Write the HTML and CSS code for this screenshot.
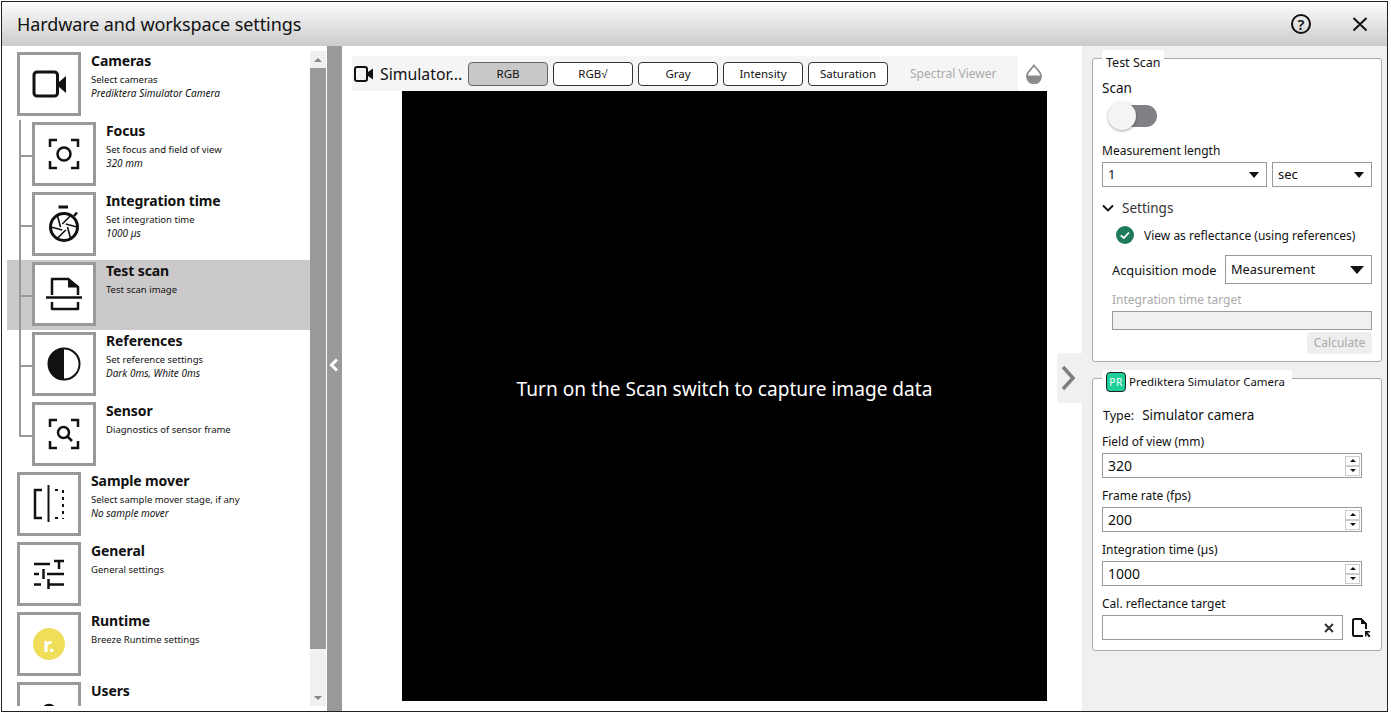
FILE: index.html
```html
<!DOCTYPE html>
<html lang="en">
<head>
<meta charset="utf-8">
<title>Hardware and workspace settings</title>
<link rel="stylesheet" href="styles.css">
</head>
<body>
<div class="window">
  <header class="titlebar">
    <h1 class="title">Hardware and workspace settings</h1>
    <span class="help">?</span>
    <svg class="close" width="16" height="16" viewBox="0 0 16 16"><path d="M1.5 2 14.5 14.5M14.5 2 1.5 14.5" fill="none" stroke="#111" stroke-width="2"/></svg>
  </header>
  <div class="body">
    <aside class="left">
      <div class="list">
        <div class="row">
          <div class="box"><svg width="58" height="58" viewBox="0 0 58 58"><rect x="14" y="17" width="23.5" height="24" rx="3" fill="none" stroke="#111" stroke-width="3"/><path d="M39 27 46 21V38L39 32Z" fill="#111"/></svg></div>
          <div class="text"><div class="name">Cameras</div><div class="sub">Select cameras</div><div class="info">Prediktera Simulator Camera</div></div>
        </div>
        <div class="row nested">
          <div class="box"><svg width="58" height="58" viewBox="0 0 58 58"><path d="M15 22V15H22M36 15H43V22M43 36V43H36M22 43H15V36" fill="none" stroke="#111" stroke-width="2.5"/><circle cx="29" cy="29" r="6.5" fill="none" stroke="#111" stroke-width="2.5"/></svg></div>
          <div class="text"><div class="name">Focus</div><div class="sub">Set focus and field of view</div><div class="info">320 mm</div></div>
        </div>
        <div class="row nested">
          <div class="box"><svg width="58" height="58" viewBox="0 0 58 58"><g fill="none" stroke="#111"><circle cx="29" cy="32" r="13.5" stroke-width="3"/><path d="M23.500 12H33" stroke-width="3"/><path d="M39 21 42 17.500" stroke-width="2.500"/><path stroke-width="1.600" d="M32.500 32 35.500 43.300M30.750 35 22.500 43.300M27.250 35 16 32M25.500 32 22.500 20.700M27.250 29 35.500 20.700M30.750 29 42 32"/></g></svg></div>
          <div class="text"><div class="name">Integration time</div><div class="sub">Set integration time</div><div class="info">1000 µs</div></div>
        </div>
        <div class="row nested selected">
          <div class="box"><svg width="58" height="58" viewBox="0 0 58 58"><path d="M17 30V14H33L43 22V30M17 37V44H43V37" fill="none" stroke="#111" stroke-width="2.5" stroke-linejoin="round"/><path d="M33 12.500 44 22.500H33Z" fill="#111"/><path d="M11 32.500H47" stroke="#111" stroke-width="2.5"/></svg></div>
          <div class="text"><div class="name">Test scan</div><div class="sub">Test scan image</div></div>
        </div>
        <div class="row nested">
          <div class="box"><svg width="58" height="58" viewBox="0 0 58 58"><circle cx="29" cy="29" r="15.5" fill="#fff" stroke="#111" stroke-width="2"/><path d="M29 13.500A15.500 15.500 0 0 0 29 44.500Z" fill="#111"/></svg></div>
          <div class="text"><div class="name">References</div><div class="sub">Set reference settings</div><div class="info">Dark 0ms, White 0ms</div></div>
        </div>
        <div class="row nested last">
          <div class="box"><svg width="58" height="58" viewBox="0 0 58 58"><path d="M15 22V15H22M36 15H43V22M43 36V43H36M22 43H15V36" fill="none" stroke="#111" stroke-width="2.500"/><circle cx="28.500" cy="27.500" r="5.500" fill="none" stroke="#111" stroke-width="2.500"/><path d="M32.500 31.500 37 36" stroke="#111" stroke-width="2.500"/></svg></div>
          <div class="text"><div class="name">Sensor</div><div class="sub">Diagnostics of sensor frame</div></div>
        </div>
        <div class="row">
          <div class="box"><svg width="58" height="58" viewBox="0 0 58 58"><path d="M22 15H15V43H22" fill="none" stroke="#111" stroke-width="2.500"/><path d="M28.500 10V47" stroke="#111" stroke-width="2"/><path d="M43 15V44" stroke="#111" stroke-width="2" stroke-dasharray="3 4"/><path d="M35 15H38M35 43H38" stroke="#111" stroke-width="2"/></svg></div>
          <div class="text"><div class="name">Sample mover</div><div class="sub">Select sample mover stage, if any</div><div class="info">No sample mover</div></div>
        </div>
        <div class="row">
          <div class="box"><svg width="58" height="58" viewBox="0 0 58 58"><path d="M14 19H30M34 16H44M39 16V24M14 29H19M23.500 24V34M27 29H44M14 39.500H21M28.500 34V44M28.500 39.500H44" fill="none" stroke="#111" stroke-width="2.500"/></svg></div>
          <div class="text"><div class="name">General</div><div class="sub">General settings</div></div>
        </div>
        <div class="row">
          <div class="box"><span class="runtime-logo">r.</span></div>
          <div class="text"><div class="name">Runtime</div><div class="sub">Breeze Runtime settings</div></div>
        </div>
        <div class="row">
          <div class="box"><svg width="58" height="58" viewBox="0 0 58 58"><circle cx="29" cy="26" r="6" fill="none" stroke="#111" stroke-width="2.500"/></svg></div>
          <div class="text"><div class="name">Users</div><div class="sub">Add or manage users</div></div>
        </div>
      </div>
      <div class="scrollbar">
        <div class="sb-btn"><i class="tri-up"></i></div>
        <div class="sb-thumb"></div>
        <div class="sb-rest"></div>
        <div class="sb-btn"><i class="tri-down"></i></div>
      </div>
    </aside>
    <div class="splitter"><svg width="10" height="14" viewBox="0 0 10 14"><path d="M8 1.500 2.500 7 8 12.500" fill="none" stroke="#fff" stroke-width="3"/></svg></div>
    <main class="center">
      <div class="viewer">
        <div class="toolbar">
          <svg class="cam" width="20" height="16" viewBox="0 0 20 16"><rect x="1" y="1" width="12" height="14" rx="2" fill="none" stroke="#111" stroke-width="2"/><path d="M14 6 19 2.500V13.500L14 10Z" fill="#111"/></svg>
          <span class="cam-name">Simulator...</span>
          <button class="tb active">RGB</button>
          <button class="tb">RGB√</button>
          <button class="tb">Gray</button>
          <button class="tb">Intensity</button>
          <button class="tb">Saturation</button>
          <span class="spectral">Spectral Viewer</span>
          <span class="drop-cell"><svg width="16" height="20" viewBox="0 0 16 20"><path d="M8 1.500 13.500 8A7 7 0 1 1 2.500 8Z" fill="#fff" stroke="#8a8a8a" stroke-width="1.800"/><path d="M1 11.500H15A7 7 0 0 1 1 11.500Z" fill="#8a8a8a"/></svg></span>
        </div>
        <div class="image">Turn on the Scan switch to capture image data</div>
      </div>
      <div class="expander"><svg width="14" height="26" viewBox="0 0 14 26"><path d="M2 2 12 13 2 24" fill="none" stroke="#7f7f7f" stroke-width="3.500"/></svg></div>
    </main>
    <aside class="right">
      <section class="group group-scan">
        <div class="group-title">Test Scan</div>
        <div class="lbl-big">Scan</div>
        <div class="toggle"><span class="knob"></span></div>
        <div class="lbl lbl-ml">Measurement length</div>
        <div class="combos">
          <div class="combo combo-len">1<i class="tri-combo"></i></div>
          <div class="combo combo-unit">sec<i class="tri-combo"></i></div>
        </div>
        <div class="settings"><svg width="12" height="8" viewBox="0 0 12 8"><path d="M1 1.500 6 6.500 11 1.500" fill="none" stroke="#111" stroke-width="1.800"/></svg><span>Settings</span></div>
        <div class="reflect">
          <svg width="18" height="18" viewBox="0 0 18 18"><circle cx="9" cy="9" r="9" fill="#1f7a5c"/><path d="M4.800 9.300 7.800 12 13 6.500" fill="none" stroke="#fff" stroke-width="1.800"/></svg>
          <span>View as reflectance (using references)</span>
        </div>
        <div class="acq"><span class="acq-lbl">Acquisition mode</span><div class="combo combo-acq">Measurement<i class="tri-combo big"></i></div></div>
        <div class="lbl disabled lbl-target">Integration time target</div>
        <div class="input-off"></div>
        <div class="calc-row"><span class="calc">Calculate</span></div>
      </section>
      <section class="group group-cam">
        <div class="group-title cam-title"><span class="badge">PR</span>Prediktera Simulator Camera</div>
        <div class="type"><span>Type:</span><span class="type-val">Simulator camera</span></div>
        <div class="lbl field-lbl">Field of view (mm)</div>
        <div class="spin">320<span class="spin-btns"><b><i class="tri-s-up"></i></b><b><i class="tri-s-down"></i></b></span></div>
        <div class="lbl field-lbl">Frame rate (fps)</div>
        <div class="spin">200<span class="spin-btns"><b><i class="tri-s-up"></i></b><b><i class="tri-s-down"></i></b></span></div>
        <div class="lbl field-lbl">Integration time (µs)</div>
        <div class="spin">1000<span class="spin-btns"><b><i class="tri-s-up"></i></b><b><i class="tri-s-down"></i></b></span></div>
        <div class="lbl field-lbl">Cal. reflectance target</div>
        <div class="file-row">
          <div class="file-input"><svg width="10" height="10" viewBox="0 0 10 10"><path d="M1 1 9 9M9 1 1 9" stroke="#333" stroke-width="2"/></svg></div>
          <svg class="file-icon" width="20" height="22" viewBox="0 0 20 22"><path d="M12 19H3.500A1.500 1.500 0 0 1 2 17.500V3.500A1.500 1.500 0 0 1 3.500 2H10L15 7V12" fill="none" stroke="#111" stroke-width="2"/><path d="M10 1 16 7H10Z" fill="#111"/><path d="M14 14H19V15.500H16.500L19.500 19 18 20.500 15.500 17V19.500H14Z" fill="#111"/></svg>
        </div>
      </section>
    </aside>
  </div>
</div>
</body>
</html>
```
FILE: styles.css
```css
* { box-sizing: border-box; }
html, body { margin: 0; padding: 0; width: 1391px; height: 712px; overflow: hidden; background: #fff; }
body { font-family: "Noto Sans", "Liberation Sans", sans-serif; color: #111; padding: 1px 0 0 1px; }

.window { width: 1387px; height: 711px; border: 1px solid #222; display: flex; flex-direction: column; background: #fff; }

.titlebar { height: 44px; flex: none; display: flex; align-items: center; padding-left: 15px; background: linear-gradient(#fdfdfd, #cbcbcb); }
.title { flex: 1; margin: 0; font-size: 18px; font-weight: 400; color: #111; letter-spacing: -0.1px; }
.help { width: 20px; height: 20px; border: 2px solid #111; border-radius: 50%; display: flex; align-items: center; justify-content: center; font-size: 15px; font-weight: 600; margin-right: 41px; }
.close { margin-right: 19px; }

.body { flex: 1; display: flex; min-height: 0; }

.left { width: 325px; flex: none; display: flex; padding: 4px 1px 5px 5px; background: #fff; }
.list { width: 303px; flex: none; overflow: hidden; }
.row { position: relative; height: 70px; flex: none; display: flex; padding-top: 2px; padding-left: 10px; }
.row.nested { padding-left: 25px; }
.row.selected { background: #cbc9c9; }
.row.nested::before { content: ""; position: absolute; left: 12px; top: 0; bottom: 0; width: 2px; background: #999; }
.row.nested.last::before { bottom: 34px; }
.row.nested::after { content: ""; position: absolute; left: 12px; top: 35px; width: 13px; height: 2px; background: #999; }
.box { width: 64px; height: 64px; flex: none; border: 3px solid #999; background: #fff; display: flex; align-items: center; justify-content: center; }
.box svg { display: block; }
.text { margin-left: 10px; margin-top: -1px; }
.name { font-size: 14px; font-weight: 700; line-height: 19px; height: 19px; color: #111; letter-spacing: -0.1px; }
.sub { font-size: 9.500px; line-height: 13px; margin-top: 3px; }
.info { font-size: 10px; line-height: 14px; font-style: italic; }
.runtime-logo { width: 32px; height: 32px; border-radius: 50%; background: #f0de5a; color: #fff; font-size: 20px; font-weight: 700; display: flex; align-items: center; justify-content: center; }

.scrollbar { width: 16px; flex: none; margin-top: 1px; display: flex; flex-direction: column; background: #f0f0f0; }
.sb-btn { height: 17px; flex: none; display: flex; align-items: center; justify-content: center; }
.sb-thumb { flex: none; height: 581px; background: #999; }
.sb-rest { flex: 1; }
.tri-up { border: 4px solid transparent; border-top: 0; border-bottom: 4px solid #888; }
.tri-down { border: 4px solid transparent; border-bottom: 0; border-top: 4px solid #888; }

.splitter { width: 15px; flex: none; background: #999; display: flex; align-items: center; justify-content: center; padding: 0 1px 27px 0; }

.center { flex: 1; display: flex; min-width: 0; padding: 10px 0 10px 10px; background: #fff; }
.viewer { width: 695px; flex: none; display: flex; flex-direction: column; }
.toolbar { height: 35px; flex: none; display: flex; align-items: center; background: #f5f5f5; padding-left: 2px; }
.cam { flex: none; }
.cam-name { flex: none; font-size: 15.800px; margin-left: 6px; width: 88px; white-space: nowrap; }
.tb { flex: none; width: 80px; height: 24px; margin-right: 5px; padding: 0; border: 1px solid #333; border-radius: 4px; background: #fff; font-family: inherit; font-size: 11.500px; color: #111; }
.tb.active { background: #c8c8c8; border-color: #666; }
.spectral { flex: none; margin-left: 17px; width: 108px; font-size: 12px; color: #aaa; white-space: nowrap; }
.drop-cell { flex: none; width: 29px; height: 35px; padding-left: 3px; background: #fff; display: flex; align-items: center; justify-content: center; }
.image { flex: none; width: 645px; height: 610px; margin-left: 50px; padding-bottom: 14px; background: #000; color: #fff; font-size: 19.100px; display: flex; align-items: center; justify-content: center; }

.expander { width: 25px; height: 50px; margin-left: 10px; margin-top: 297px; padding-right: 4px; flex: none; background: #f0f0f0; border-radius: 4px 0 0 4px; display: flex; align-items: center; justify-content: center; }

.right { width: 305px; flex: none; background: #f0f0f0; padding: 12px 5px 0 10px; display: flex; flex-direction: column; gap: 16px; }
.group { position: relative; background: #fff; border: 1px solid #aaa; border-radius: 3px; padding: 0 9px; }
.group-scan { height: 304px; padding-top: 20px; }
.group-cam { height: 273px; padding-top: 27px; }
.group-title { position: absolute; top: -9px; left: 9px; height: 20px; padding: 0 4px; background: #fff; border-radius: 4px 4px 0 0; font-size: 12.500px; line-height: 26px; white-space: nowrap; }
.cam-title { top: -9px; display: flex; align-items: center; height: 24px; padding: 0 7px 0 4px; font-size: 11.500px; line-height: 20px; }
.badge { width: 20px; height: 20px; margin-right: 3px; border: 1px solid #222; border-radius: 4px; background: #1fcf9a; color: #fff; font-size: 10px; line-height: 18px; text-align: center; letter-spacing: 0.5px; }

.lbl-big { font-size: 13.500px; line-height: 18px; }
.toggle { position: relative; margin-top: 5px; margin-left: 6px; width: 49px; height: 28px; display: flex; align-items: center; }
.toggle::before { content: ""; width: 45px; height: 22px; margin-left: 4px; border-radius: 11px; background: #808085; }
.knob { position: absolute; left: 0; top: 0; width: 28px; height: 28px; border-radius: 50%; background: #f5f5f5; box-shadow: 0 1px 3px rgba(0,0,0,.35); }

.lbl { font-size: 12px; line-height: 18px; height: 16px; }
.lbl-ml { margin-top: 12px; }
.combos { display: flex; gap: 5px; margin-top: 4px; }
.combo { position: relative; height: 25px; border: 1px solid #999; background: #fff; font-size: 13px; line-height: 23px; padding-left: 5px; display: flex; align-items: center; justify-content: space-between; padding-right: 7px; }
.combo-len { width: 165px; }
.combo-unit { width: 100px; }
.tri-combo { border: 5px solid transparent; border-bottom: 0; border-top: 6px solid #111; border-left-width: 5px; border-right-width: 5px; }
.tri-combo.big { border-left-width: 7px; border-right-width: 7px; border-top-width: 8px; }
.settings { display: flex; align-items: center; gap: 8px; margin-top: 12px; height: 18px; font-size: 13.500px; color: #333; }
.settings svg { margin-left: 0; }
.reflect { display: flex; align-items: center; height: 20px; margin-top: 8px; margin-left: 14px; font-size: 12px; }
.reflect span { margin-left: 10px; }
.acq { display: flex; align-items: center; margin-top: 10px; margin-left: 10px; height: 29px; }
.acq-lbl { font-size: 12.800px; width: 113px; white-space: nowrap; }
.combo-acq { width: 147px; height: 29px; font-size: 12.800px; }
.disabled { color: #aaa; }
.lbl-target { margin-top: 7px; margin-left: 10px; }
.input-off { height: 19px; margin-top: 4px; margin-left: 10px; background: #f0f0f0; border: 1px solid #999; }
.calc-row { display: flex; justify-content: flex-end; margin-top: 2px; }
.calc { width: 65px; height: 22px; border-radius: 4px; background: #eee; color: #aaa; font-size: 12px; line-height: 22px; text-align: center; }

.type { display: flex; height: 18px; align-items: center; margin-left: 1px; font-size: 12.500px; }
.type-val { margin-left: 8px; font-size: 13.500px; }
.field-lbl { margin-top: 9px; }
.spin { position: relative; margin-top: 4px; width: 260px; height: 25px; border: 1px solid #999; background: #fff; font-size: 14px; line-height: 23px; padding-left: 5px; display: flex; justify-content: space-between; align-items: center; }
.spin-btns { display: flex; flex-direction: column; margin-right: 1px; }
.spin-btns b { width: 15px; height: 10px; border: 1px solid #ccc; display: flex; align-items: center; justify-content: center; }
.tri-s-up { border: 3px solid transparent; border-top: 0; border-bottom: 3px solid #111; }
.tri-s-down { border: 3px solid transparent; border-bottom: 0; border-top: 3px solid #111; }
.file-row { display: flex; align-items: center; margin-top: 4px; }
.file-input { width: 241px; height: 25px; border: 1px solid #999; display: flex; align-items: center; justify-content: flex-end; padding-right: 8px; }
.file-icon { margin-left: 8px; }
```
